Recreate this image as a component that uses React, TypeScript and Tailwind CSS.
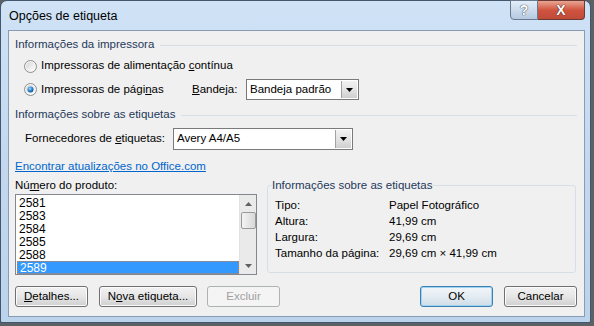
import React from "react";

const font = "font-['Liberation_Sans','Noto_Sans',sans-serif]";

function Radio({ checked }: { checked?: boolean }) {
  return (
    <svg width="13" height="13" viewBox="0 0 13 13" className="shrink-0">
      <defs>
        <linearGradient id={checked ? "rg1" : "rg0"} x1="0" y1="0" x2="1" y2="1">
          <stop offset="0" stopColor="#d6d6d6" />
          <stop offset="1" stopColor="#ffffff" />
        </linearGradient>
        <radialGradient id="dot" cx="0.4" cy="0.35" r="0.7">
          <stop offset="0" stopColor="#a8dcfa" />
          <stop offset="0.5" stopColor="#2f8ad6" />
          <stop offset="1" stopColor="#0b4d8e" />
        </radialGradient>
      </defs>
      <circle cx="6.5" cy="6.5" r="6" fill="#f4f4f4" stroke="#8e8f8f" />
      <circle cx="6.5" cy="6.5" r="4.5" fill={`url(#${checked ? "rg1" : "rg0"})`} />
      {checked && <circle cx="6.5" cy="6.5" r="3" fill="url(#dot)" />}
    </svg>
  );
}

function DropButton() {
  return (
    <div className="w-[16px] h-full border-l border-[#a3a3a3] bg-gradient-to-b from-[#f2f2f2] via-[#e4e4e4] to-[#cfcfcf] flex items-center justify-center">
      <svg width="7" height="4" viewBox="0 0 7 4">
        <path d="M0 0h7L3.5 4z" fill="#000" />
      </svg>
    </div>
  );
}

function Combo({ value, className }: { value: string; className: string }) {
  return (
    <div className={`flex border border-[#7a7a7a] bg-white ${className}`}>
      <div className="flex-1 flex items-center pl-[3px] text-black whitespace-nowrap">{value}</div>
      <div className="p-px h-full">
        <DropButton />
      </div>
    </div>
  );
}

function Header({ children }: { children: React.ReactNode }) {
  return (
    <div className="flex items-center h-[14px] pr-[7px]">
      <span className="text-[#1e395b] whitespace-nowrap">{children}</span>
      <div className="flex-1 h-px bg-[#d5dfe5] ml-[6px]" />
    </div>
  );
}

function Button({
  children,
  className = "",
  primary,
  disabled,
}: {
  children: React.ReactNode;
  className?: string;
  primary?: boolean;
  disabled?: boolean;
}) {
  const border = disabled
    ? "border-[#adb2b5] bg-[#f4f4f4] text-[#a0a0a0]"
    : primary
    ? "border-[#3c7fb1] bg-gradient-to-b from-[#f2f6f9] via-[#e4ecf2] to-[#cfdde8] text-black shadow-[inset_0_0_0_1px_#9fd3f2]"
    : "border-[#707070] bg-gradient-to-b from-[#f2f2f2] via-[#e6e6e6] to-[#cfcfcf] text-black shadow-[inset_0_0_0_1px_#fbfbfb]";
  return (
    <div
      className={`h-[21px] rounded-[3px] border flex items-center justify-center whitespace-nowrap ${border} ${className}`}
    >
      {children}
    </div>
  );
}

const items = ["2581", "2583", "2584", "2585", "2588", "2589"];

export default function App() {
  return (
    <div className={`w-[594px] h-[326px] bg-[#5c6166] overflow-hidden text-[11.5px] leading-none whitespace-nowrap ${font}`}>
      <div className="w-[591px] h-[323px] rounded-t-[7px] rounded-b-[2px] border border-[#42566e] bg-gradient-to-b from-[#cfe2f6] via-[#c3d8ef] to-[#bcd3ec] flex flex-col">
        {/* title bar */}
        <div className="h-[29px] flex items-start">
          <div className="pl-[8px] pt-[9px] text-black text-[12.5px]">Opções de etiqueta</div>
          <div className="flex-1" />
          <div className="flex mr-[5px] -mt-px">
            <div className="w-[28px] h-[20px] rounded-bl-[4px] border border-[#6a7a8e] bg-gradient-to-b from-[#e4eef8] to-[#b5c9e0] flex items-center justify-center">
              <span className="text-white font-bold text-[14px] [text-shadow:0_0_1px_#2a3a4e,0_0_1px_#2a3a4e]">?</span>
            </div>
            <div className="w-[47px] h-[20px] rounded-br-[4px] border border-l-0 border-[#6a3a34] bg-gradient-to-b from-[#e8a493] via-[#d0543f] to-[#c04a3a] flex items-center justify-center">
              <span className="text-white font-bold text-[14px] [text-shadow:0_0_1px_#3a1a14,0_0_1px_#3a1a14]">X</span>
            </div>
          </div>
        </div>

        {/* client area */}
        <div className="ml-[7px] w-[577px] h-[287px] border border-[#8a9cb4] bg-[#f0f0f0] pl-[6px] flex flex-col">
          <div className="mt-[7px]">
            <Header>Informações da impressora</Header>
          </div>

          <div className="mt-[7px] h-[14px] flex items-center pl-[9px] gap-[4px]">
            <Radio />
            <span>
              Impressoras de alimentação <span className="underline">c</span>ontínua
            </span>
          </div>

          <div className="mt-[6px] h-[21px] flex items-center pl-[9px]">
            <Radio checked />
            <span className="ml-[4px] w-[151px]">
              Impressoras de pági<span className="underline">n</span>as
            </span>
            <span className="w-[54px]">
              <span className="underline">B</span>andeja:
            </span>
            <Combo value="Bandeja padrão" className="w-[113px] h-[21px]" />
          </div>

          <div className="mt-[8px]">
            <Header>Informações sobre as etiquetas</Header>
          </div>

          <div className="mt-[6px] h-[22px] flex items-center pl-[10px]">
            <span className="w-[148px]">
              Fornecedores de <span className="underline">e</span>tiquetas:
            </span>
            <Combo value="Avery A4/A5" className="w-[180px] h-[22px]" />
          </div>

          <div className="mt-[10px] h-[14px] flex items-center">
            <span className="text-[#0066cc] underline">Encontrar atualizações no Office.com</span>
          </div>

          <div className="mt-[5px] flex">
            <div className="w-[242px] flex flex-col">
              <div className="h-[14px] flex items-center">
                <span>
                  Nú<span className="underline">m</span>ero do produto:
                </span>
              </div>
              <div className="mt-px h-[81px] border border-[#828790] bg-white flex">
                <div className="flex-1 pt-px pl-px flex flex-col">
                  {items.map((it, i) => (
                    <div
                      key={it}
                      className={`h-[13px] flex items-center pl-[2px] text-[12px] ${
                        i === items.length - 1
                          ? "bg-[#3399ff] text-white border border-dotted border-[#d08040]"
                          : "text-black"
                      }`}
                    >
                      {it}
                    </div>
                  ))}
                </div>
                <div className="w-[17px] bg-[#eaeaea] border-l border-[#e2e2e2] flex flex-col items-center">
                  <div className="h-[17px] flex items-center justify-center">
                    <svg width="7" height="4" viewBox="0 0 7 4">
                      <path d="M3.5 0L7 4H0z" fill="#606060" />
                    </svg>
                  </div>
                  <div className="w-[15px] h-[17px] rounded-[2px] border border-[#9a9a9a] bg-gradient-to-r from-[#f4f4f4] to-[#d8d8d8]" />
                  <div className="flex-1" />
                  <div className="h-[17px] flex items-center justify-center">
                    <svg width="7" height="4" viewBox="0 0 7 4">
                      <path d="M0 0h7L3.5 4z" fill="#606060" />
                    </svg>
                  </div>
                </div>
              </div>
            </div>

            <div className="ml-[10px] mt-[6px] w-[309px] h-[88px] rounded-[3px] border border-[#d5dfe5] flex flex-col">
              <div className="-mt-[7px] ml-[4px] h-[14px] flex items-center">
                <span className="bg-[#f0f0f0] pr-px text-[#1e395b]">Informações sobre as etiquetas</span>
              </div>
              <div className="mt-[5px] ml-[7px] grid grid-cols-[114px_1fr] auto-rows-[16px] items-center">
                <span>Tipo:</span>
                <span>Papel Fotográfico</span>
                <span>Altura:</span>
                <span>41,99 cm</span>
                <span>Largura:</span>
                <span>29,69 cm</span>
                <span>Tamanho da página:</span>
                <span>29,69 cm × 41,99 cm</span>
              </div>
            </div>
          </div>

          <div className="mt-[11px] flex pr-[7px]">
            <Button className="w-[73px]">
              <span>
                <span className="underline">D</span>etalhes...
              </span>
            </Button>
            <Button className="w-[98px] ml-[11px]">
              <span>
                N<span className="underline">o</span>va etiqueta...
              </span>
            </Button>
            <Button className="w-[73px] ml-[10px]" disabled>
              Excluir
            </Button>
            <div className="flex-1" />
            <Button className="w-[73px]" primary>
              OK
            </Button>
            <Button className="w-[73px] ml-[11px]">Cancelar</Button>
          </div>
        </div>
      </div>
    </div>
  );
}
